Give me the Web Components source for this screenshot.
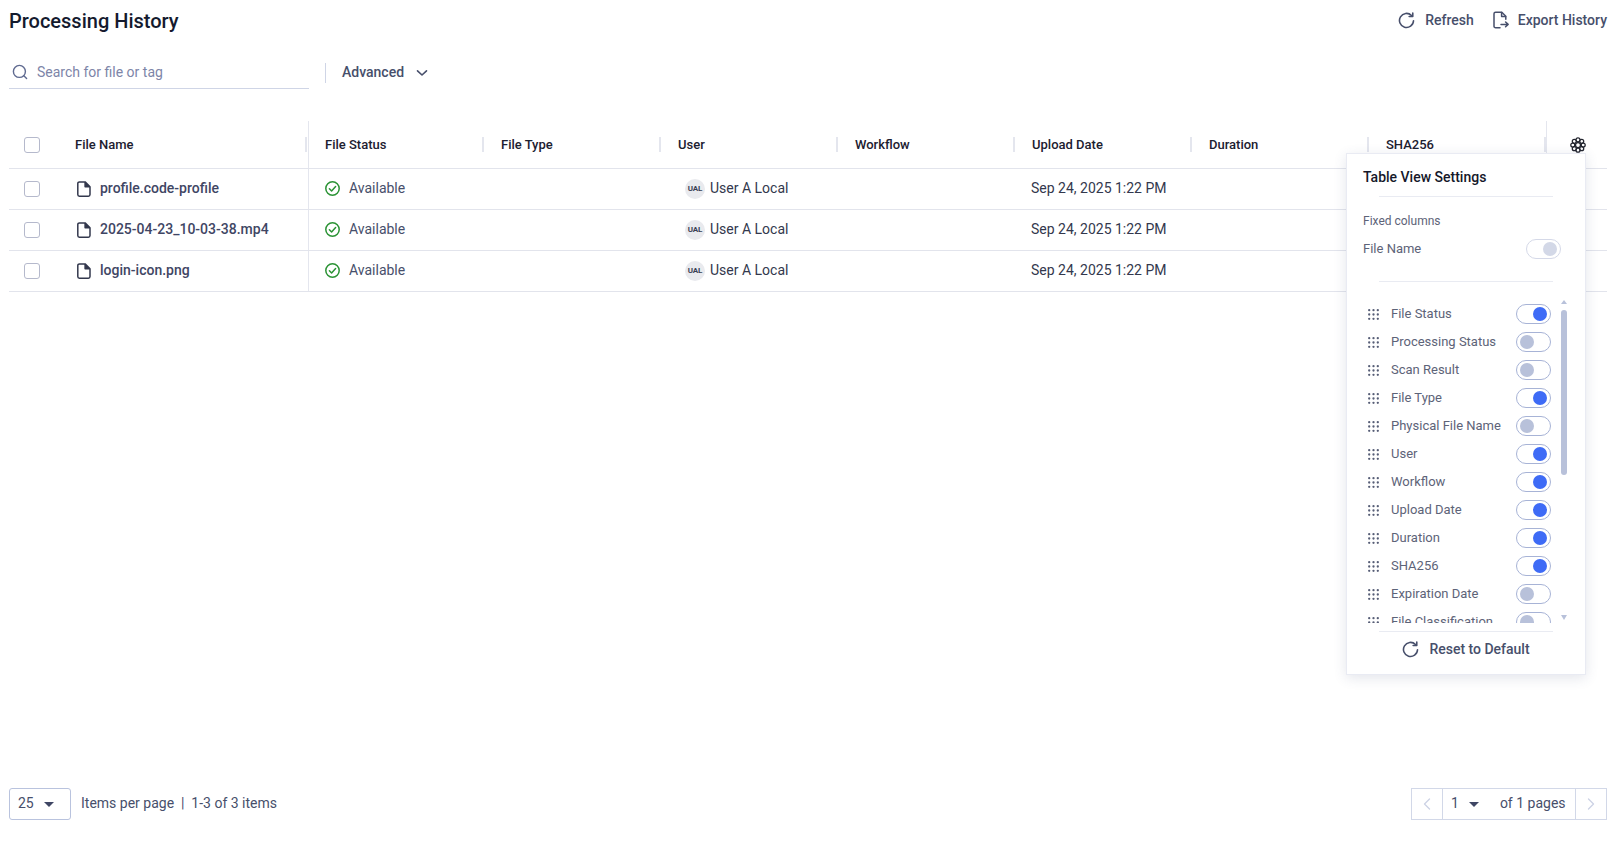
<!DOCTYPE html>
<html lang="en">
<head>
<meta charset="utf-8">
<title>Processing History</title>
<style>
  html, body { margin: 0; height: 100%; background: #fff; }
  body { font-family: Roboto, "Liberation Sans", sans-serif; overflow: hidden; }
</style>
</head>
<body>
<history-page></history-page>
<script>
// shared icons, all inline svg
const ICONS = {
  refresh: `<svg viewBox="0 0 16 16" fill="none" stroke="currentColor" stroke-width="1.5" stroke-linecap="round" stroke-linejoin="round"><path d="M14.6 8.2a6.6 6.6 0 1 1-1.9-4.9"/><path d="M13.9 .9v3.4h-3.4"/></svg>`,
  exportFile: `<svg viewBox="0 0 16 18" fill="none" stroke="currentColor" stroke-width="1.5" stroke-linecap="round" stroke-linejoin="round"><path d="M7 16.8H2.6a1.6 1.6 0 0 1-1.6-1.6V2.8a1.6 1.6 0 0 1 1.6-1.6h6.2l4 4v3"/><path d="M8.6 1.4v4h4"/><path d="M8 13.4h7M12.6 11l2.5 2.4-2.5 2.4"/></svg>`,
  search: `<svg viewBox="0 0 16 16" fill="none" stroke="currentColor" stroke-width="1.4" stroke-linecap="round"><circle cx="7.4" cy="7.4" r="6"/><path d="M11.8 11.8l2.8 2.8"/></svg>`,
  chevron: `<svg viewBox="0 0 12 8" fill="none" stroke="currentColor" stroke-width="1.6" stroke-linecap="round" stroke-linejoin="round"><path d="M1.5 1.8L6 6l4.5-4.2"/></svg>`,
  file: `<svg viewBox="0 0 14 16" fill="none" stroke="currentColor" stroke-width="1.5" stroke-linejoin="round"><path d="M2.4.9h5.7l4.9 4.9v7.8a1.6 1.6 0 0 1-1.6 1.6H2.4a1.6 1.6 0 0 1-1.6-1.6V2.5A1.6 1.6 0 0 1 2.4.9z"/><path d="M8.1 1v4.7H13" fill="currentColor"/></svg>`,
  ok: `<svg viewBox="0 0 15 15" fill="none" stroke="#2b9335" stroke-width="1.5" stroke-linecap="round" stroke-linejoin="round"><circle cx="7.5" cy="7.5" r="6.7"/><path d="M4.4 7.8l2.2 2.2 4-4.4"/></svg>`,
  gear: `<svg viewBox="0 0 16 16" fill="none" stroke="#23252f" stroke-width="1.25"><circle cx="8" cy="8" r="2.5"/><circle cx="8" cy="2.8" r="2"/><circle cx="8" cy="13.2" r="2"/><circle cx="2.8" cy="8" r="2"/><circle cx="13.2" cy="8" r="2"/><circle cx="4.3" cy="4.3" r="2"/><circle cx="11.7" cy="4.3" r="2"/><circle cx="4.3" cy="11.7" r="2"/><circle cx="11.7" cy="11.7" r="2"/></svg>`,
  grip: `<svg viewBox="0 0 11 11" fill="#565d76"><circle cx="1.2" cy="1.2" r="1.15"/><circle cx="5.5" cy="1.2" r="1.15"/><circle cx="9.8" cy="1.2" r="1.15"/><circle cx="1.2" cy="5.5" r="1.15"/><circle cx="5.5" cy="5.5" r="1.15"/><circle cx="9.8" cy="5.5" r="1.15"/><circle cx="1.2" cy="9.8" r="1.15"/><circle cx="5.5" cy="9.8" r="1.15"/><circle cx="9.8" cy="9.8" r="1.15"/></svg>`,
  caret: `<svg viewBox="0 0 10 5"><path d="M0 0h10L5 5z" fill="currentColor"/></svg>`,
  prev: `<svg viewBox="0 0 8 12" fill="none" stroke="currentColor" stroke-width="1.4" stroke-linecap="round" stroke-linejoin="round"><path d="M6.5 1L1.5 6l5 5"/></svg>`,
  next: `<svg viewBox="0 0 8 12" fill="none" stroke="currentColor" stroke-width="1.4" stroke-linecap="round" stroke-linejoin="round"><path d="M1.5 1l5 5-5 5"/></svg>`,
};

// base class, saves writing attachShadow everywhere
class ShadowElement extends HTMLElement {
  render(html) {
    (this.shadowRoot || this.attachShadow({ mode: "open" })).innerHTML = html;
  }
}

customElements.define("toggle-switch", class extends ShadowElement {
  connectedCallback() {
    const on = this.hasAttribute("on"), locked = this.hasAttribute("locked");
    this.render(`<style>
      :host{display:block;width:35px;height:20px;box-sizing:border-box;border:1px solid ${locked ? "#d5d9e8" : "#a7b3d6"};border-radius:10px;background:#fff;position:relative;flex:none}
      i{position:absolute;top:2px;width:14px;height:14px;border-radius:50%;${on ? "right:3px;" : "left:3px;"}background:${locked ? "#d3d8e7" : on ? "#3e6bf6" : "#b8c1da"}}
    </style><i></i>`);
  }
});

customElements.define("page-header", class extends ShadowElement {
  connectedCallback() {
    this.render(`<style>
      :host{display:flex;align-items:center;height:42px;color:#474f6b}
      h1{margin:0;flex:1;font:500 20px/24px Roboto,sans-serif;color:#141a2e}
      span{display:flex;align-items:center;font:500 14px/20px Roboto,sans-serif;margin-top:-2px}
      svg{display:block;width:17px;height:17px;margin-right:10px}
      .ex{margin-left:19px}
      .ex svg{width:16px;height:18px;margin-right:9px}
    </style>
    <h1><slot></slot></h1>
    <span>${ICONS.refresh}Refresh</span>
    <span class="ex">${ICONS.exportFile}Export History</span>`);
  }
});

customElements.define("search-bar", class extends ShadowElement {
  connectedCallback() {
    this.render(`<style>
      :host{display:flex;align-items:center;height:33px;margin-top:14px}
      .box{width:300px;height:33px;box-sizing:border-box;border-bottom:1px solid #cfd5e6;display:flex;align-items:center;padding-left:3px;font:400 14px/20px Roboto,sans-serif;color:#7d85a8}
      .box svg{width:16px;height:16px;margin-right:9px;color:#5f6a90}
      .sep{width:1px;height:20px;background:#cfd5e6;margin:0 16px}
      .adv{display:flex;align-items:center;font:500 14px/20px Roboto,sans-serif;color:#474f6b;margin-top:-2px}
      .adv svg{width:12px;height:8px;margin-left:12px;margin-top:2px}
    </style>
    <div class="box">${ICONS.search}Search for file or tag</div>
    <div class="sep"></div>
    <div class="adv">Advanced${ICONS.chevron}</div>`);
  }
});

const COLS = ["File Type", "User", "Workflow", "Upload Date", "Duration", "SHA256"];

customElements.define("history-table", class extends ShadowElement {
  connectedCallback() {
    const files = ["profile.code-profile", "2025-04-23_10-03-38.mp4", "login-icon.png"];
    const check = `<b class="check"></b>`;
    const head = `<div class="row head">
      <div class="name">${check}<span class="nm">File Name</span><i class="sep"></i></div>
      <div class="cell first">File Status<i class="sep"></i></div>
      ${COLS.map((c) => `<div class="cell">${c}<i class="sep"></i></div>`).join("")}
      <div class="gear">${ICONS.gear}</div>
    </div>`;
    const rows = files.map((f) => `<div class="row">
      <div class="name">${check}<span class="fi">${ICONS.file}</span><span class="fn t">${f}</span></div>
      <div class="cell first status">${ICONS.ok}<span class="t">Available</span></div>
      <div class="cell"></div>
      <div class="cell user"><span class="av">UAL</span><span class="t">User A Local</span></div>
      <div class="cell"></div>
      <div class="cell dark"><span class="t">Sep 24, 2025 1:22 PM</span></div>
      <div class="cell"></div>
      <div class="cell"></div>
      <div class="gear"></div>
    </div>`).join("");
    this.render(`<style>
      :host{display:block;position:relative;margin-top:32px;font:400 14px/20px Roboto,sans-serif;color:#474f6b}
      .row{display:flex;height:41px;border-bottom:1px solid #e2e4ec;box-sizing:border-box;align-items:stretch}
      .head{height:48px;font:500 13px/18px Roboto,sans-serif;color:#1c2030}
      .name{width:300px;box-sizing:border-box;border-right:1px solid #e4e6ee;display:flex;align-items:center;padding-left:15px;position:relative;flex:none}
      .check{width:16px;height:16px;box-sizing:border-box;border:1px solid #b5b9cc;border-radius:3px;background:#fff;flex:none}
      .nm{margin-left:35px}
      .fi{margin-left:37px;color:#33384d;display:block;width:14px;height:16px}
      .fi svg{display:block;width:14px;height:16px}
      .fn{margin-left:9px;font-weight:500;color:#3f4664}
      .t{margin-top:-2px}
      .cell{width:177px;box-sizing:border-box;padding-left:16px;display:flex;align-items:center;position:relative;flex:none}
      .head .cell{padding-left:17px}
      .first{width:175px}
      .head .first{padding-left:16px}
      .sep{position:absolute;right:0;top:16px;width:2px;height:15px;background:#e4e6ee}
      .name .sep{right:1px}
      .status svg{width:15px;height:15px;margin:-1px 9px 0 0}
      .user{padding-left:24px;color:#33384d}
      .av{width:20px;height:20px;border-radius:50%;background:#e9eaee;color:#3a3f55;font:700 8px/20px Roboto,sans-serif;text-align:center;letter-spacing:-.2px;margin-right:5px;flex:none}
      .dark{color:#33384d}
      .gear{flex:1;border-left:1px solid #e4e6ee;display:flex;align-items:center;justify-content:center;padding-left:2px}
      .row:not(.head) .gear{border-left:0}
      .gear svg{width:16px;height:16px;display:block}
      ::slotted(view-settings){position:absolute;top:32px;right:21px}
    </style>${head}${rows}<slot></slot>`);
  }
});

customElements.define("view-settings", class extends ShadowElement {
  connectedCallback() {
    const items = [["File Status",1],["Processing Status",0],["Scan Result",0],["File Type",1],["Physical File Name",0],["User",1],["Workflow",1],["Upload Date",1],["Duration",1],["SHA256",1],["Expiration Date",0],["File Classification",0]];
    this.render(`<style>
      :host{display:block;width:240px;height:522px;box-sizing:border-box;background:#fff;border:1px solid #e9ebf3;box-shadow:0 3px 12px rgba(60,70,110,.14);font:400 13px/18px Roboto,sans-serif;color:#5d6378}
      h2{margin:0;padding:13px 16px 0;height:29px;font:500 14px/20px Roboto,sans-serif;color:#15182a}
      hr{border:0;height:1px;background:#e9ebf2;margin:0 32px;padding:0}
      .fx{font-size:12px;margin-top:15px;height:18px;padding:0 16px}
      .fr{display:flex;align-items:center;justify-content:space-between;margin-top:9px;height:20px;padding:0 24px 0 16px}
      .sp{margin-top:22px}
      .scroll{display:flex;height:332px;margin:9px 0 8px;overflow:hidden}
      ul{list-style:none;margin:0;padding:13px 0 0 21px;width:204px;box-sizing:border-box;overflow:hidden;flex:none}
      li{display:flex;align-items:center;height:20px;margin-bottom:8px}
      li svg{width:11px;height:11px;margin-right:12px;flex:none}
      li span{flex:1;white-space:nowrap}
      .bar{width:7px;margin-left:9px;display:flex;flex-direction:column;align-items:center;padding-top:9px;box-sizing:border-box}
      .up,.dn{width:0;height:0;border-left:3.5px solid transparent;border-right:3.5px solid transparent}
      .up{border-bottom:4px solid #b8c1da}
      .dn{border-top:5px solid #b8c1da;margin-top:140px}
      .th{width:6px;height:165px;border-radius:3px;background:#b8c1da;margin-top:6px}
      .reset{display:flex;align-items:center;justify-content:center;height:34px;font:500 14px/20px Roboto,sans-serif;color:#474f6b}
      .reset svg{width:17px;height:17px;margin-right:10px}
    </style>
    <h2>Table View Settings</h2>
    <hr>
    <div class="fx">Fixed columns</div>
    <div class="fr"><span>File Name</span><toggle-switch on locked></toggle-switch></div>
    <hr class="sp">
    <div class="scroll">
      <ul>${items.map(([t, on]) => `<li>${ICONS.grip}<span>${t}</span><toggle-switch ${on ? "on" : ""}></toggle-switch></li>`).join("")}</ul>
      <div class="bar"><i class="up"></i><i class="th"></i><i class="dn"></i></div>
    </div>
    <hr>
    <div class="reset">${ICONS.refresh}Reset to Default</div>`);
  }
});

customElements.define("pager-bar", class extends ShadowElement {
  connectedCallback() {
    const caret = ICONS.caret.replace("<svg", '<svg class="c"');
    this.render(`<style>
      :host{display:flex;align-items:center;justify-content:space-between;height:32px;margin-top:auto;margin-bottom:22px;font:400 14px/20px Roboto,sans-serif;color:#474f6b}
      .left{display:flex;align-items:center}
      .size{width:62px;height:32px;box-sizing:border-box;border:1px solid #b9c3de;border-radius:3px;display:flex;align-items:center;padding:0 0 2px 8px;margin-right:10px}
      .txt{padding-bottom:2px}
      svg.c{width:10px;height:5px;margin-left:10px;margin-top:3px;color:#3f4664}
      .pages{display:flex;height:32px;box-sizing:border-box;border:1px solid #d2d8e8;align-items:center}
      .nav{width:30px;height:30px;display:flex;align-items:center;justify-content:center;color:#cdd3e5}
      .nav svg{width:8px;height:12px}
      .mid{width:134px;height:30px;box-sizing:border-box;border:solid #d2d8e8;border-width:0 1px;display:flex;align-items:center;padding:0 0 2px 8px}
      .mid svg.c{margin-right:21px}
    </style>
    <div class="left"><div class="size">25${caret}</div><span class="txt">Items per page&nbsp; |&nbsp; 1-3 of 3 items</span></div>
    <div class="pages"><div class="nav">${ICONS.prev}</div><div class="mid">1${caret}of 1 pages</div><div class="nav">${ICONS.next}</div></div>`);
  }
});

customElements.define("history-page", class extends ShadowElement {
  connectedCallback() {
    this.render(`<style>
      :host{display:flex;flex-direction:column;height:842px;box-sizing:border-box;padding:0 16px 0 9px}
    </style>
    <page-header>Processing History</page-header>
    <search-bar></search-bar>
    <history-table><view-settings></view-settings></history-table>
    <pager-bar></pager-bar>`);
  }
});
</script>
</body>
</html>
